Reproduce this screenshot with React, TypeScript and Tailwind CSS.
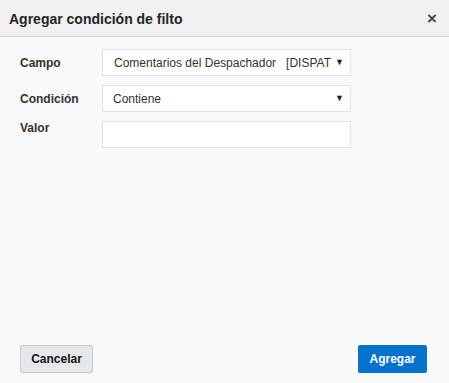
const fieldClass =
  'h-[27px] w-[249px] border border-[#dfe4e7] bg-white text-[12px] text-[#333] flex items-center';

export default function App() {
  return (
    <div
      className="w-[449px] h-[383px] bg-[#f8f9fa] flex flex-col text-[#333]"
      style={{ fontFamily: '"Liberation Sans", Arial, sans-serif' }}
    >
      {/* Cabecera */}
      <div className="h-[37px] shrink-0 bg-[#f1f1f1] border-b border-[#d6dadd] flex items-center justify-between pl-[9px] pr-[12px]">
        <h2 className="text-[14px] font-bold text-[#252525] leading-none pt-[1px]">Agregar condición de filto</h2>
        <button className="text-[17px] font-bold text-[#444] leading-none">×</button>
      </div>

      {/* Formulario */}
      <div className="flex-1 pt-[12px] pl-[20px] flex flex-col gap-[9px]">
        <div className="flex items-center">
          <label className="w-[82px] text-[12px] font-bold">Campo</label>
          <div className={`${fieldClass} pl-[11px] pr-[6px] justify-between`}>
            <span className="whitespace-nowrap overflow-hidden">Comentarios del Despachador&nbsp;&nbsp;&nbsp;[DISPAT</span>
            <span className="text-[9px] text-[#222] ml-[4px]">▼</span>
          </div>
        </div>
        <div className="flex items-center">
          <label className="w-[82px] text-[12px] font-bold">Condición</label>
          <div className={`${fieldClass} pl-[10px] pr-[6px] justify-between`}>
            <span>Contiene</span>
            <span className="text-[9px] text-[#222]">▼</span>
          </div>
        </div>
        <div className="flex items-start">
          <label className="w-[82px] text-[12px] font-bold leading-[14px]">Valor</label>
          <input className={`${fieldClass} px-[10px] outline-none`} />
        </div>
      </div>

      {/* Pie */}
      <div className="h-[38px] shrink-0 flex items-start justify-between pl-[20px] pr-[22px]">
        <button className="h-[28px] w-[73px] bg-[#e4e8eb] border border-[#c4ccd1] rounded-[2px] text-[12px] font-bold text-[#161616]">
          Cancelar
        </button>
        <button className="h-[28px] w-[69px] bg-[#0572ce] rounded-[2px] text-[12px] font-bold text-white">
          Agregar
        </button>
      </div>
    </div>
  );
}
